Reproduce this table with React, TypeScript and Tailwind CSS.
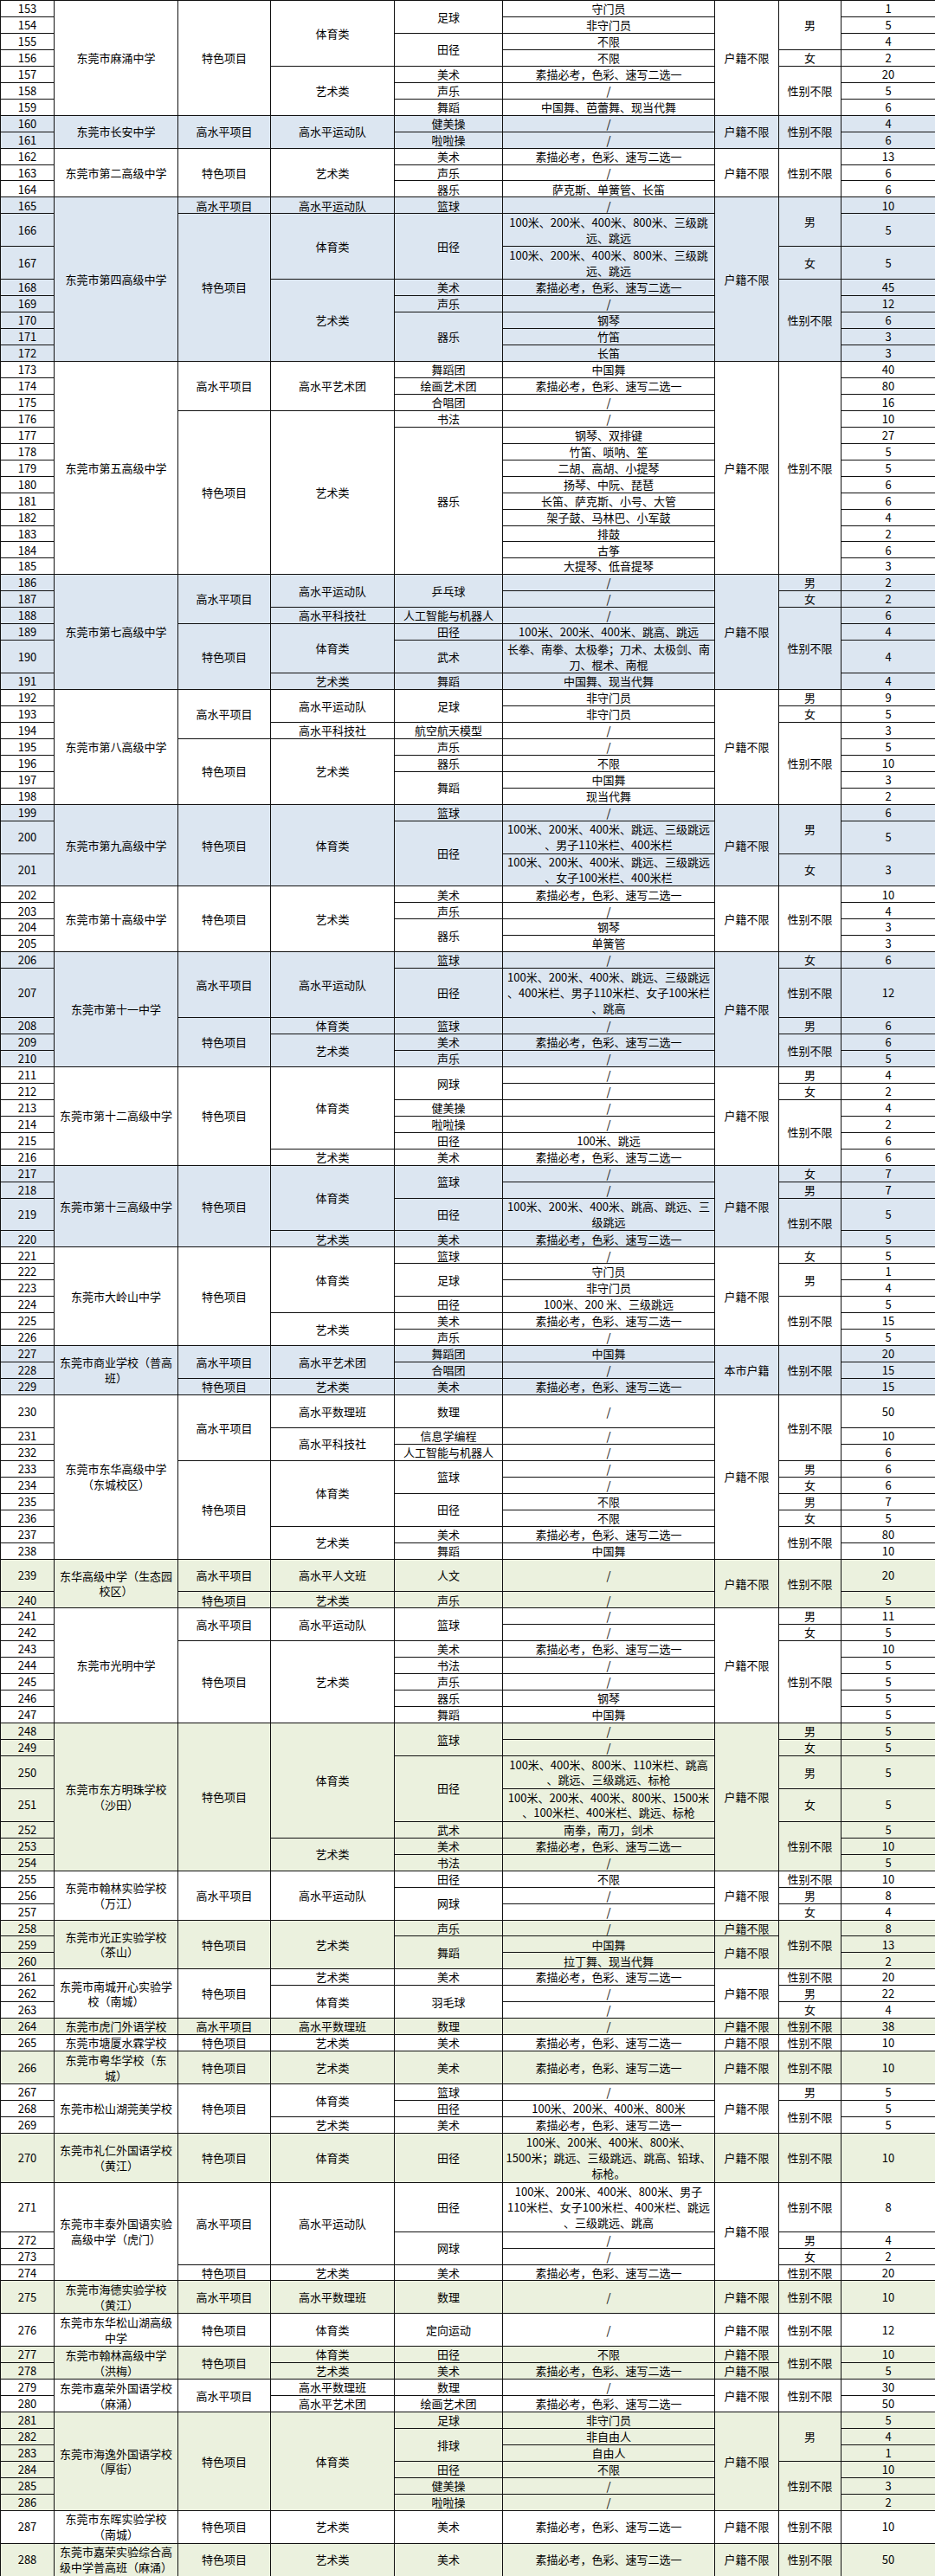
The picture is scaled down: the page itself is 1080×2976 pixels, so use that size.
type Cell = [string, number?];
type Row = [number, Cell[]];
type Group = { tone: "w" | "b" | "g"; rows: Row[] };

const ART = "素描必考，色彩、速写二选一";

const r = (cells: Cell[], h = 1): Row => [h, cells];

const groups: Group[] = [
  {
    tone: "w",
    rows: [
      r([["东莞市麻涌中学", 7], ["特色项目", 7], ["体育类", 4], ["足球", 2], ["守门员"], ["户籍不限", 7], ["男", 3], ["1"]]),
      r([["非守门员"], ["5"]]),
      r([["田径", 2], ["不限"], ["4"]]),
      r([["不限"], ["女"], ["2"]]),
      r([["艺术类", 3], ["美术"], [ART], ["性别不限", 3], ["20"]]),
      r([["声乐"], ["/"], ["5"]]),
      r([["舞蹈"], ["中国舞、芭蕾舞、现当代舞"], ["6"]]),
    ],
  },
  {
    tone: "b",
    rows: [
      r([["东莞市长安中学", 2], ["高水平项目", 2], ["高水平运动队", 2], ["健美操"], ["/"], ["户籍不限", 2], ["性别不限", 2], ["4"]]),
      r([["啦啦操"], ["/"], ["6"]]),
    ],
  },
  {
    tone: "w",
    rows: [
      r([["东莞市第二高级中学", 3], ["特色项目", 3], ["艺术类", 3], ["美术"], [ART], ["户籍不限", 3], ["性别不限", 3], ["13"]]),
      r([["声乐"], ["/"], ["6"]]),
      r([["器乐"], ["萨克斯、单簧管、长笛"], ["6"]]),
    ],
  },
  {
    tone: "b",
    rows: [
      r([["东莞市第四高级中学", 8], ["高水平项目"], ["高水平运动队"], ["篮球"], ["/"], ["户籍不限", 8], ["男", 2], ["10"]]),
      r([["特色项目", 7], ["体育类", 2], ["田径", 2], ["100米、200米、400米、800米、三级跳\n远、跳远"], ["5"]], 2),
      r([["100米、200米、400米、800米、三级跳\n远、跳远"], ["女"], ["5"]], 2),
      r([["艺术类", 5], ["美术"], [ART], ["性别不限", 5], ["45"]]),
      r([["声乐"], ["/"], ["12"]]),
      r([["器乐", 3], ["钢琴"], ["6"]]),
      r([["竹笛"], ["3"]]),
      r([["长笛"], ["3"]]),
    ],
  },
  {
    tone: "w",
    rows: [
      r([["东莞市第五高级中学", 13], ["高水平项目", 3], ["高水平艺术团", 3], ["舞蹈团"], ["中国舞"], ["户籍不限", 13], ["性别不限", 13], ["40"]]),
      r([["绘画艺术团"], [ART], ["80"]]),
      r([["合唱团"], ["/"], ["16"]]),
      r([["特色项目", 10], ["艺术类", 10], ["书法"], ["/"], ["10"]]),
      r([["器乐", 9], ["钢琴、双排键"], ["27"]]),
      r([["竹笛、唢呐、笙"], ["5"]]),
      r([["二胡、高胡、小提琴"], ["5"]]),
      r([["扬琴、中阮、琵琶"], ["6"]]),
      r([["长笛、萨克斯、小号、大管"], ["6"]]),
      r([["架子鼓、马林巴、小军鼓"], ["4"]]),
      r([["排鼓"], ["2"]]),
      r([["古筝"], ["6"]]),
      r([["大提琴、低音提琴"], ["3"]]),
    ],
  },
  {
    tone: "b",
    rows: [
      r([["东莞市第七高级中学", 6], ["高水平项目", 3], ["高水平运动队", 2], ["乒乓球", 2], ["/"], ["户籍不限", 6], ["男"], ["2"]]),
      r([["/"], ["女"], ["2"]]),
      r([["高水平科技社"], ["人工智能与机器人"], ["/"], ["性别不限", 4], ["6"]]),
      r([["特色项目", 3], ["体育类", 2], ["田径"], ["100米、200米、400米、跳高、跳远"], ["4"]]),
      r([["武术"], ["长拳、南拳、太极拳；刀术、太极剑、南\n刀、棍术、南棍"], ["4"]], 2),
      r([["艺术类"], ["舞蹈"], ["中国舞、现当代舞"], ["4"]]),
    ],
  },
  {
    tone: "w",
    rows: [
      r([["东莞市第八高级中学", 7], ["高水平项目", 3], ["高水平运动队", 2], ["足球", 2], ["非守门员"], ["户籍不限", 7], ["男"], ["9"]]),
      r([["非守门员"], ["女"], ["5"]]),
      r([["高水平科技社"], ["航空航天模型"], ["/"], ["性别不限", 5], ["3"]]),
      r([["特色项目", 4], ["艺术类", 4], ["声乐"], ["/"], ["5"]]),
      r([["器乐"], ["不限"], ["10"]]),
      r([["舞蹈", 2], ["中国舞"], ["3"]]),
      r([["现当代舞"], ["2"]]),
    ],
  },
  {
    tone: "b",
    rows: [
      r([["东莞市第九高级中学", 3], ["特色项目", 3], ["体育类", 3], ["篮球"], ["/"], ["户籍不限", 3], ["男", 2], ["6"]]),
      r([["田径", 2], ["100米、200米、400米、跳远、三级跳远\n、男子110米栏、400米栏"], ["5"]], 2),
      r([["100米、200米、400米、跳远、三级跳远\n、女子100米栏、400米栏"], ["女"], ["3"]], 2),
    ],
  },
  {
    tone: "w",
    rows: [
      r([["东莞市第十高级中学", 4], ["特色项目", 4], ["艺术类", 4], ["美术"], [ART], ["户籍不限", 4], ["性别不限", 4], ["10"]]),
      r([["声乐"], ["/"], ["4"]]),
      r([["器乐", 2], ["钢琴"], ["3"]]),
      r([["单簧管"], ["3"]]),
    ],
  },
  {
    tone: "b",
    rows: [
      r([["东莞市第十一中学", 5], ["高水平项目", 2], ["高水平运动队", 2], ["篮球"], ["/"], ["户籍不限", 5], ["女"], ["6"]]),
      r([["田径"], ["100米、200米、400米、跳远、三级跳远\n、400米栏、男子110米栏、女子100米栏\n、跳高"], ["性别不限"], ["12"]], 3),
      r([["特色项目", 3], ["体育类"], ["篮球"], ["/"], ["男"], ["6"]]),
      r([["艺术类", 2], ["美术"], [ART], ["性别不限", 2], ["6"]]),
      r([["声乐"], ["/"], ["5"]]),
    ],
  },
  {
    tone: "w",
    rows: [
      r([["东莞市第十二高级中学", 6], ["特色项目", 6], ["体育类", 5], ["网球", 2], ["/"], ["户籍不限", 6], ["男"], ["4"]]),
      r([["/"], ["女"], ["2"]]),
      r([["健美操"], ["/"], ["性别不限", 4], ["4"]]),
      r([["啦啦操"], ["/"], ["2"]]),
      r([["田径"], ["100米、跳远"], ["6"]]),
      r([["艺术类"], ["美术"], [ART], ["6"]]),
    ],
  },
  {
    tone: "b",
    rows: [
      r([["东莞市第十三高级中学", 4], ["特色项目", 4], ["体育类", 3], ["篮球", 2], ["/"], ["户籍不限", 4], ["女"], ["7"]]),
      r([["/"], ["男"], ["7"]]),
      r([["田径"], ["100米、200米、400米、跳高、跳远、三\n级跳远"], ["性别不限", 2], ["5"]], 2),
      r([["艺术类"], ["美术"], [ART], ["5"]]),
    ],
  },
  {
    tone: "w",
    rows: [
      r([["东莞市大岭山中学", 6], ["特色项目", 6], ["体育类", 4], ["篮球"], ["/"], ["户籍不限", 6], ["女"], ["5"]]),
      r([["足球", 2], ["守门员"], ["男", 2], ["1"]]),
      r([["非守门员"], ["4"]]),
      r([["田径"], ["100米、200 米、三级跳远"], ["性别不限", 3], ["5"]]),
      r([["艺术类", 2], ["美术"], [ART], ["15"]]),
      r([["声乐"], ["/"], ["5"]]),
    ],
  },
  {
    tone: "b",
    rows: [
      r([["东莞市商业学校（普高\n班）", 3], ["高水平项目", 2], ["高水平艺术团", 2], ["舞蹈团"], ["中国舞"], ["本市户籍", 3], ["性别不限", 3], ["20"]]),
      r([["合唱团"], ["/"], ["15"]]),
      r([["特色项目"], ["艺术类"], ["美术"], [ART], ["15"]]),
    ],
  },
  {
    tone: "w",
    rows: [
      r([["东莞市东华高级中学\n（东城校区）", 9], ["高水平项目", 3], ["高水平数理班"], ["数理"], ["/"], ["户籍不限", 9], ["性别不限", 3], ["50"]], 2),
      r([["高水平科技社", 2], ["信息学编程"], ["/"], ["10"]]),
      r([["人工智能与机器人"], ["/"], ["6"]]),
      r([["特色项目", 6], ["体育类", 4], ["篮球", 2], ["/"], ["男"], ["6"]]),
      r([["/"], ["女"], ["6"]]),
      r([["田径", 2], ["不限"], ["男"], ["7"]]),
      r([["不限"], ["女"], ["5"]]),
      r([["艺术类", 2], ["美术"], [ART], ["性别不限", 2], ["80"]]),
      r([["舞蹈"], ["中国舞"], ["10"]]),
    ],
  },
  {
    tone: "g",
    rows: [
      r([["东华高级中学（生态园\n校区）", 2], ["高水平项目"], ["高水平人文班"], ["人文"], ["/"], ["户籍不限", 2], ["性别不限", 2], ["20"]], 2),
      r([["特色项目"], ["艺术类"], ["声乐"], ["/"], ["5"]]),
    ],
  },
  {
    tone: "w",
    rows: [
      r([["东莞市光明中学", 7], ["高水平项目", 2], ["高水平运动队", 2], ["篮球", 2], ["/"], ["户籍不限", 7], ["男"], ["11"]]),
      r([["/"], ["女"], ["5"]]),
      r([["特色项目", 5], ["艺术类", 5], ["美术"], [ART], ["性别不限", 5], ["10"]]),
      r([["书法"], ["/"], ["5"]]),
      r([["声乐"], ["/"], ["5"]]),
      r([["器乐"], ["钢琴"], ["5"]]),
      r([["舞蹈"], ["中国舞"], ["5"]]),
    ],
  },
  {
    tone: "g",
    rows: [
      r([["东莞市东方明珠学校\n（沙田）", 7], ["特色项目", 7], ["体育类", 5], ["篮球", 2], ["/"], ["户籍不限", 7], ["男"], ["5"]]),
      r([["/"], ["女"], ["5"]]),
      r([["田径", 2], ["100米、400米、800米、110米栏、跳高\n、跳远、三级跳远、标枪"], ["男"], ["5"]], 2),
      r([["100米、200米、400米、800米、1500米\n、100米栏、400米栏、跳远、标枪"], ["女"], ["5"]], 2),
      r([["武术"], ["南拳，南刀，剑术"], ["性别不限", 3], ["5"]]),
      r([["艺术类", 2], ["美术"], [ART], ["10"]]),
      r([["书法"], ["/"], ["5"]]),
    ],
  },
  {
    tone: "w",
    rows: [
      r([["东莞市翰林实验学校\n（万江）", 3], ["高水平项目", 3], ["高水平运动队", 3], ["田径"], ["不限"], ["户籍不限", 3], ["性别不限"], ["10"]]),
      r([["网球", 2], ["/"], ["男"], ["8"]]),
      r([["/"], ["女"], ["4"]]),
    ],
  },
  {
    tone: "g",
    rows: [
      r([["东莞市光正实验学校\n（茶山）", 3], ["特色项目", 3], ["艺术类", 3], ["声乐"], ["/"], ["户籍不限"], ["性别不限", 3], ["8"]]),
      r([["舞蹈", 2], ["中国舞"], ["户籍不限", 2], ["13"]]),
      r([["拉丁舞、现当代舞"], ["2"]]),
    ],
  },
  {
    tone: "w",
    rows: [
      r([["东莞市南城开心实验学\n校（南城）", 3], ["特色项目", 3], ["艺术类"], ["美术"], [ART], ["户籍不限", 3], ["性别不限"], ["20"]]),
      r([["体育类", 2], ["羽毛球", 2], ["/"], ["男"], ["22"]]),
      r([["/"], ["女"], ["4"]]),
    ],
  },
  {
    tone: "g",
    rows: [r([["东莞市虎门外语学校"], ["高水平项目"], ["高水平数理班"], ["数理"], ["/"], ["户籍不限"], ["性别不限"], ["38"]])],
  },
  {
    tone: "w",
    rows: [r([["东莞市塘厦水霖学校"], ["特色项目"], ["艺术类"], ["美术"], [ART], ["户籍不限"], ["性别不限"], ["10"]])],
  },
  {
    tone: "g",
    rows: [r([["东莞市粤华学校（东\n城）"], ["特色项目"], ["艺术类"], ["美术"], [ART], ["户籍不限"], ["性别不限"], ["10"]], 2)],
  },
  {
    tone: "w",
    rows: [
      r([["东莞市松山湖莞美学校", 3], ["特色项目", 3], ["体育类", 2], ["篮球"], ["/"], ["户籍不限", 3], ["男"], ["5"]]),
      r([["田径"], ["100米、200米、400米、800米"], ["性别不限", 2], ["5"]]),
      r([["艺术类"], ["美术"], [ART], ["5"]]),
    ],
  },
  {
    tone: "g",
    rows: [
      r(
        [
          ["东莞市礼仁外国语学校\n（黄江）"],
          ["特色项目"],
          ["体育类"],
          ["田径"],
          ["100米、200米、400米、800米、\n1500米；跳远、三级跳远、跳高、铅球、\n标枪。"],
          ["户籍不限"],
          ["性别不限"],
          ["10"],
        ],
        3,
      ),
    ],
  },
  {
    tone: "w",
    rows: [
      r(
        [
          ["东莞市丰泰外国语实验\n高级中学（虎门）", 4],
          ["高水平项目", 3],
          ["高水平运动队", 3],
          ["田径"],
          ["100米、200米、400米、800米、男子\n110米栏、女子100米栏、400米栏、跳远\n、三级跳远、跳高"],
          ["户籍不限", 4],
          ["性别不限"],
          ["8"],
        ],
        3,
      ),
      r([["网球", 2], ["/"], ["男"], ["4"]]),
      r([["/"], ["女"], ["2"]]),
      r([["特色项目"], ["艺术类"], ["美术"], [ART], ["性别不限"], ["20"]]),
    ],
  },
  {
    tone: "g",
    rows: [r([["东莞市海德实验学校\n（黄江）"], ["高水平项目"], ["高水平数理班"], ["数理"], ["/"], ["户籍不限"], ["性别不限"], ["10"]], 2)],
  },
  {
    tone: "w",
    rows: [r([["东莞市东华松山湖高级\n中学"], ["特色项目"], ["体育类"], ["定向运动"], ["/"], ["户籍不限"], ["性别不限"], ["12"]], 2)],
  },
  {
    tone: "g",
    rows: [
      r([["东莞市翰林高级中学\n（洪梅）", 2], ["特色项目", 2], ["体育类"], ["田径"], ["不限"], ["户籍不限"], ["性别不限", 2], ["10"]]),
      r([["艺术类"], ["美术"], [ART], ["户籍不限"], ["5"]]),
    ],
  },
  {
    tone: "w",
    rows: [
      r([["东莞市嘉荣外国语学校\n（麻涌）", 2], ["高水平项目", 2], ["高水平数理班"], ["数理"], ["/"], ["户籍不限", 2], ["性别不限", 2], ["30"]]),
      r([["高水平艺术团"], ["绘画艺术团"], [ART], ["50"]]),
    ],
  },
  {
    tone: "g",
    rows: [
      r([["东莞市海逸外国语学校\n（厚街）", 6], ["特色项目", 6], ["体育类", 6], ["足球"], ["非守门员"], ["户籍不限", 6], ["男", 3], ["5"]]),
      r([["排球", 2], ["非自由人"], ["4"]]),
      r([["自由人"], ["1"]]),
      r([["田径"], ["不限"], ["性别不限", 3], ["10"]]),
      r([["健美操"], ["/"], ["3"]]),
      r([["啦啦操"], ["/"], ["2"]]),
    ],
  },
  {
    tone: "w",
    rows: [r([["东莞市东晖实验学校\n（南城）"], ["特色项目"], ["艺术类"], ["美术"], [ART], ["户籍不限"], ["性别不限"], ["10"]], 2)],
  },
  {
    tone: "g",
    rows: [r([["东莞市嘉荣实验综合高\n级中学普高班（麻涌）"], ["特色项目"], ["艺术类"], ["美术"], [ART], ["户籍不限"], ["性别不限"], ["50"]], 2)],
  },
];

const toneBg = { w: "bg-white", b: "bg-[#dce6f1]", g: "bg-[#ebf1de]" };
const rowH = ["", "h-[18.955px]", "h-[37.91px]", "h-[56.865px]"];
const cellCls = "border border-[#111] px-0.5 py-0 text-center align-middle whitespace-pre";

export default function App() {
  let n = 153;

  return (
    <div className="w-[1080px] bg-white font-['Noto_Sans_CJK_SC','Noto_Sans',sans-serif] text-[13px] leading-[17.8px] text-black">
      <table className="w-[1080px] table-fixed border-collapse">
        <colgroup>
          <col className="w-[62px]" />
          <col className="w-[143px]" />
          <col className="w-[107px]" />
          <col className="w-[143px]" />
          <col className="w-[125px]" />
          <col className="w-[245px]" />
          <col className="w-[74px]" />
          <col className="w-[72px]" />
          <col className="w-[109px]" />
        </colgroup>
        <tbody>
          {groups.flatMap((group) =>
            group.rows.map(([h, cells]) => {
              const num = n++;
              const bg = toneBg[group.tone];
              return (
                <tr key={num} className={rowH[h]}>
                  <td className={`${cellCls} ${bg}`}>{num}</td>
                  {cells.map(([text, span], i) => (
                    <td key={i} rowSpan={span ?? 1} className={`${cellCls} ${bg}`}>
                      {text}
                    </td>
                  ))}
                </tr>
              );
            }),
          )}
        </tbody>
      </table>
    </div>
  );
}
